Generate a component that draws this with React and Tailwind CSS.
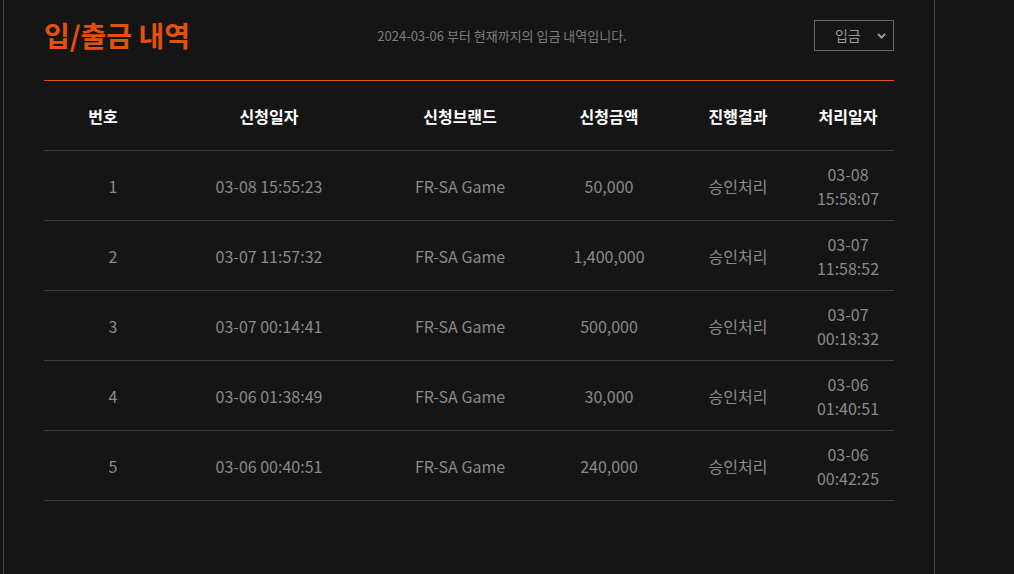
import React from "react";

const rows = [
  ["1", "03-08 15:55:23", "FR-SA Game", "50,000", "승인처리", "03-08", "15:58:07"],
  ["2", "03-07 11:57:32", "FR-SA Game", "1,400,000", "승인처리", "03-07", "11:58:52"],
  ["3", "03-07 00:14:41", "FR-SA Game", "500,000", "승인처리", "03-07", "00:18:32"],
  ["4", "03-06 01:38:49", "FR-SA Game", "30,000", "승인처리", "03-06", "01:40:51"],
  ["5", "03-06 00:40:51", "FR-SA Game", "240,000", "승인처리", "03-06", "00:42:25"],
];

const font = { fontFamily: '"Noto Sans CJK KR", "Noto Sans", sans-serif' };

export default function App() {
  return (
    <div className="w-full h-[574px] bg-[#151515] flex overflow-hidden" style={font}>
      <div className="ml-[3px] w-[932px] h-full border-x border-[#444] px-10">
        <div className="flex items-center justify-between pt-5 pb-[29px] border-b border-[#e4500e]">
          <h1 className="text-[28px] leading-[31px] font-bold text-[#e4500e]">입/출금 내역</h1>
          <p className="text-[13px] text-[#7f7f7f]">2024-03-06 부터 현재까지의 입금 내역입니다.</p>
          <div className="w-[80px] h-[31px] border border-[#6a6a6a] flex items-center pl-5 pr-[7px] justify-between">
            <span className="text-[14px] text-[#9a9a9a]">입금</span>
            <svg width="9" height="6" viewBox="0 0 9 6" fill="none">
              <path d="M1 1 L4.5 4.5 L8 1" stroke="#999" strokeWidth="2" />
            </svg>
          </div>
        </div>
        <div className="grid grid-cols-[118px_214px_168px_130px_128px_92px] h-[70px] border-b border-[#3c3c3c] items-center text-center text-[16px] font-bold text-white">
          <div>번호</div>
          <div>신청일자</div>
          <div>신청브랜드</div>
          <div>신청금액</div>
          <div>진행결과</div>
          <div>처리일자</div>
        </div>
        {rows.map((r) => (
          <div
            key={r[0]}
            className="grid grid-cols-[118px_214px_168px_130px_128px_92px] h-[70px] border-b border-[#3c3c3c] items-center text-center text-[16px] leading-[24px] text-[#8a8a8a]"
          >
            <div className="pl-5">{r[0]}</div>
            <div>{r[1]}</div>
            <div>{r[2]}</div>
            <div>{r[3]}</div>
            <div>{r[4]}</div>
            <div>
              <div>{r[5]}</div>
              <div>{r[6]}</div>
            </div>
          </div>
        ))}
      </div>
    </div>
  );
}
